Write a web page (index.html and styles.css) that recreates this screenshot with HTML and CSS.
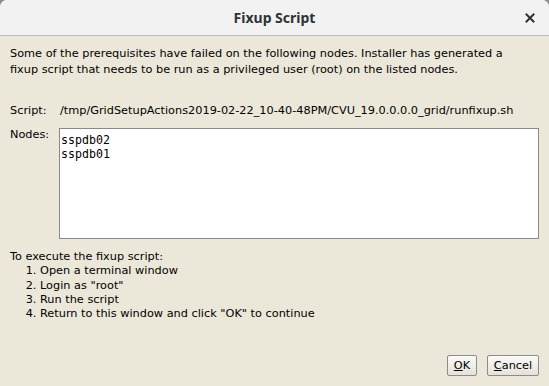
FILE: index.html
```html
<!DOCTYPE html>
<html>
<head>
<meta charset="utf-8">
<link rel="stylesheet" href="styles.css">
</head>
<body>
<div class="window">
  <header class="titlebar">
    <span class="title">Fixup Script</span>
    <span class="close">
      <svg width="10" height="10" viewBox="0 0 10 10"><path d="M1.5 1.5 L8.5 8.5 M8.5 1.5 L1.5 8.5" stroke="#2e3436" stroke-width="2" stroke-linecap="square"/></svg>
    </span>
  </header>
  <main class="content">
    <p class="intro">Some of the prerequisites have failed on the following nodes. Installer has generated a fixup script that needs to be run as a privileged user (root) on the listed nodes.</p>
    <div class="row script-row">
      <span class="label">Script:</span>
      <span class="value">/tmp/GridSetupActions2019-02-22_10-40-48PM/CVU_19.0.0.0.0_grid/runfixup.sh</span>
    </div>
    <div class="row nodes-row">
      <span class="label">Nodes:</span>
      <div class="nodes">
        <div>sspdb02</div>
        <div>sspdb01</div>
      </div>
    </div>
    <div class="steps">
      <div>To execute the fixup script:</div>
      <ol>
        <li>Open a terminal window</li>
        <li>Login as "root"</li>
        <li>Run the script</li>
        <li>Return to this window and click "OK" to continue</li>
      </ol>
    </div>
    <div class="buttons">
      <button class="btn ok"><u>O</u>K</button>
      <button class="btn cancel"><u>C</u>ancel</button>
    </div>
  </main>
</div>
</body>
</html>
```
FILE: styles.css
```css
html, body {
  margin: 0;
  padding: 0;
  width: 549px;
  height: 386px;
  overflow: hidden;
  background: #8c8c8c;
}
.window {
  width: 549px;
  height: 386px;
  display: flex;
  flex-direction: column;
  background: #ebe8da;
  border-radius: 7px 7px 0 0;
  overflow: hidden;
  font-family: "DejaVu Sans", sans-serif;
  font-size: 11.3px;
  color: #000;
}
.titlebar {
  height: 35px;
  flex: none;
  background: #f2f2f2;
  border-bottom: 1px solid #bdbdbd;
  display: flex;
  align-items: center;
  justify-content: center;
  position: relative;
}
.title {
  font-family: "Noto Sans", "Open Sans", sans-serif;
  font-weight: bold;
  font-size: 14px;
  color: #2e3436;
}
.close {
  position: absolute;
  right: 14px;
  top: 13px;
  width: 10px;
  height: 10px;
  display: flex;
}
.content {
  flex: 1;
  display: flex;
  flex-direction: column;
  padding: 10px 10px 0 10px;
}
.intro {
  margin: 0;
  width: 510px;
  line-height: 16px;
  padding-top: 0;
}
.row {
  display: flex;
}
.label {
  width: 50px;
  flex: none;
}
.script-row {
  margin-top: 26px;
}
.nodes-row {
  margin-top: 11px;
}
.nodes {
  margin-left: -1px;
  width: 480px;
  height: 111px;
  background: #fff;
  border: 1px solid #8a8a8a;
  font-family: "DejaVu Sans Mono", monospace;
  font-size: 11.6px;
  line-height: 14px;
  padding: 4px 1px;
  box-sizing: border-box;
}
.steps {
  margin-top: 11px;
  line-height: 14.3px;
}
.steps ol {
  margin: 0;
  padding-left: 30px;
}
.buttons {
  display: flex;
  justify-content: flex-end;
  gap: 10px;
  margin-top: auto;
  margin-bottom: 10px;
}
.btn {
  font-family: "DejaVu Sans", sans-serif;
  font-size: 11.3px;
  height: 21px;
  border: 1px solid #8c8c8c;
  border-radius: 2px;
  background: linear-gradient(#fbfbf8, #e4e2d8);
  color: #000;
}
.ok { width: 30px; padding: 0; }
.cancel { width: 52px; padding: 0; }
```
